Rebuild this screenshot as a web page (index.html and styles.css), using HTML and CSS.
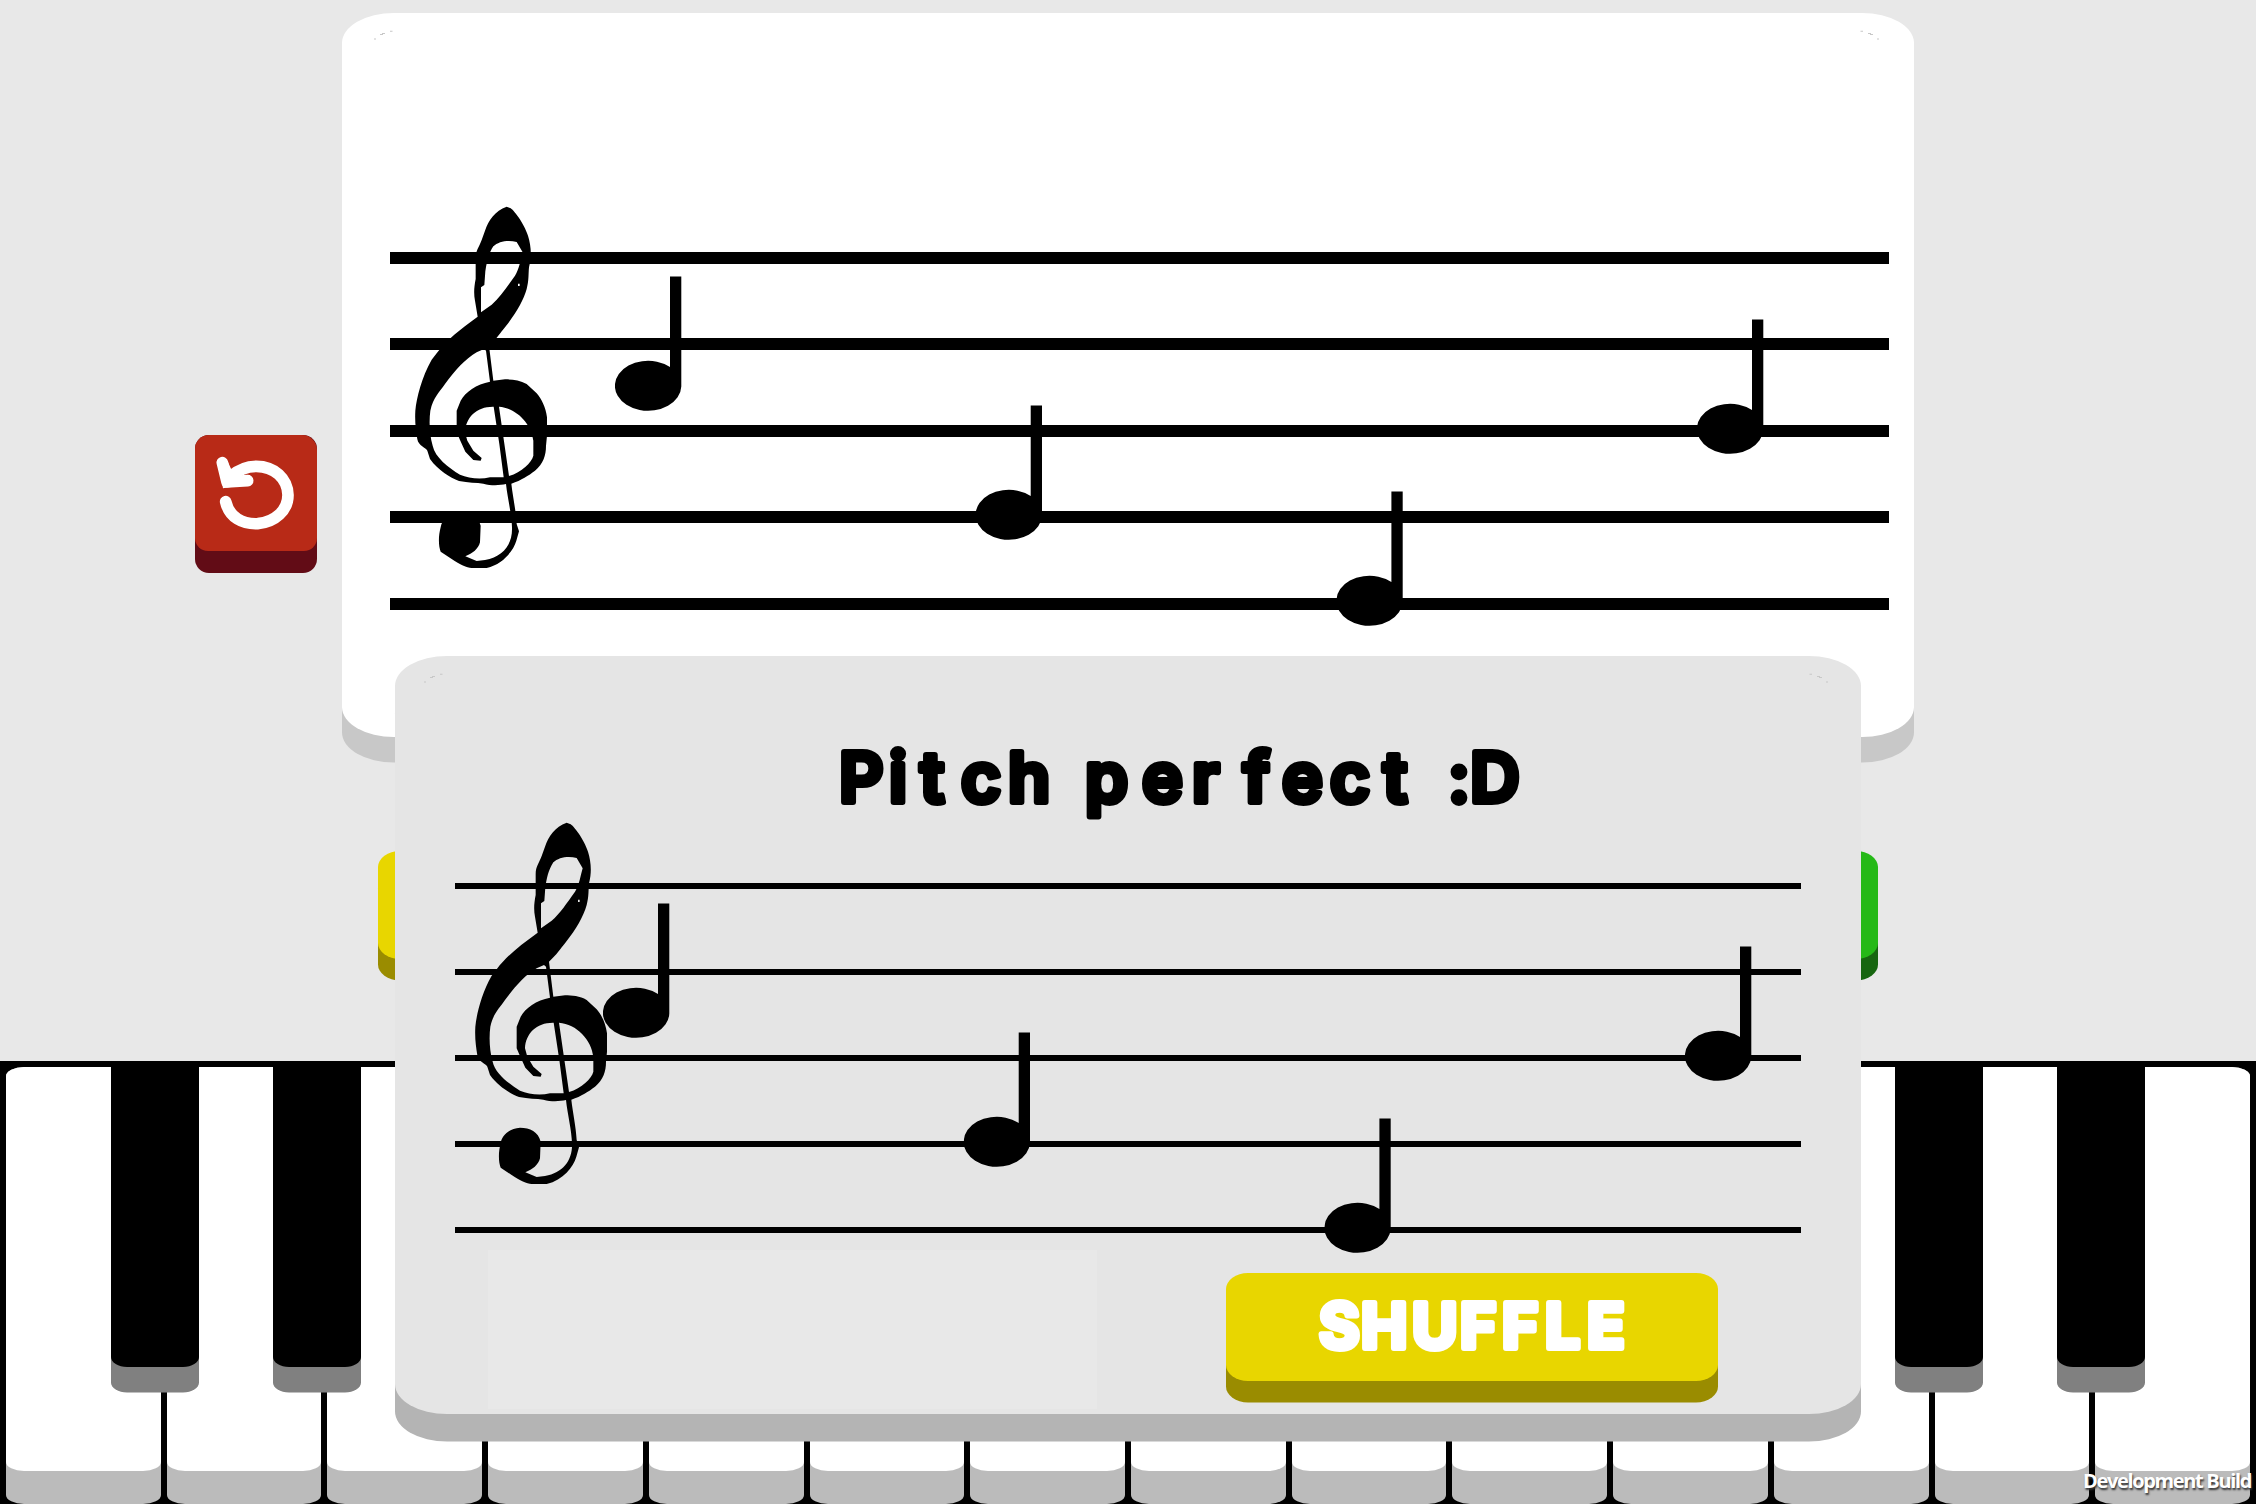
FILE: index.html
```html
<!DOCTYPE html>
<html lang="en">
<head>
<meta charset="utf-8">
<title>Pitch perfect</title>
<link rel="stylesheet" href="styles.css">
</head>
<body>
<svg class="defs" aria-hidden="true">
  <symbol id="clef" viewBox="0 0 600 1200">
    <path fill-rule="evenodd" d="M380 68C345 80 325 110 315 140L305 168C297 190 287 200 287 222V285C282 310 281 330 285 350L293 398C240 436 200 468 170 508L155 527C125 580 110 640 106 680C104 715 108 740 112 766C115 785 138 792 142 800L150 825C175 860 210 880 237 891C265 897 290 896 310 899C335 906 360 904 378 900C382 940 395 990 396 1030C398 1080 370 1118 315 1128L290 1131L256 1117C278 1108 295 1095 300 1075L302 1025C295 995 270 983 240 983C210 985 185 1005 182 1030C175 1055 175 1085 182 1103L215 1125C240 1143 260 1150 275 1152H320C370 1140 400 1100 409 1070L417 1042L410 1020C408 980 398 935 394 899C425 888 445 875 465 860C490 838 498 815 498 785L501 755V700C497 670 485 645 470 628L440 600C420 588 395 586 375 586L340 590L327 485C350 465 362 445 375 430C410 385 430 350 440 315C447 290 445 270 447 250C456 215 453 185 444 155C432 118 400 75 390 72ZM303 385V310L313 303L316 262C320 235 325 210 340 187C355 172 385 167 410 174L428 205C422 225 418 255 405 275C380 310 360 340 335 362ZM290 505L312 495L318 500L330 593C290 600 255 625 242 650L230 680V745L240 768L256 803L280 828L302 830L305 822L280 800L262 770L255 745C257 700 290 667 341 668L358 780L371 880H330C300 887 265 883 240 872C205 850 165 820 158 785C148 750 147 710 151 680C160 640 178 625 195 600C225 560 255 525 290 505ZM357 668C410 672 455 720 460 770V815C455 835 425 865 387 876ZM414 299H419V306H414Z"/>
  </symbol>
  <symbol id="note" viewBox="0 0 67 136">
    <path d="M55 0.5H66.3V110.500A33.200 25 0 1 1 55 91Z"/>
  </symbol>
  <symbol id="flecks" viewBox="0 0 20 12">
    <path class="fleck" d="M0 8.500h2v1h-2zM6 4h2v-1h3v1h-2v1h-3zM16 0.800h2.500v1h-2.500z"/>
  </symbol>
</svg>

<main class="game">
  <section class="top">
    <button class="reset" aria-label="Reset">
      <svg class="reset-icon" viewBox="0 0 366 348">
        <path d="M92 200C103 248 143 268 188 266C240 262 279 226 279 180C278 131 238 94 184 94C157 94 128 106 106 125"/>
        <path d="M82 83L96 141L158 137" />
        <path class="tip" d="M70 85L99 81L110 106L137 128L158 124L160 148L84 160Z"/>
      </svg>
    </button>
    <div class="sheet">
      <svg class="flecks left"><use href="#flecks"/></svg>
      <svg class="flecks right"><use href="#flecks"/></svg>
      <div class="staff">
        <i></i><i></i><i></i><i></i><i></i>
        <svg class="clef"><use href="#clef"/></svg>
        <svg class="note n1"><use href="#note"/></svg>
        <svg class="note n2"><use href="#note"/></svg>
        <svg class="note n3"><use href="#note"/></svg>
        <svg class="note n4"><use href="#note"/></svg>
      </div>
    </div>
  </section>
  <section class="actions">
    <button class="btn yellow" aria-label="Play"></button>
    <button class="btn green" aria-label="Check"></button>
  </section>
  <section class="keyboard">
    <div class="white"></div><div class="white"></div><div class="white"></div><div class="white"></div><div class="white"></div><div class="white"></div><div class="white"></div>
    <div class="white"></div><div class="white"></div><div class="white"></div><div class="white"></div><div class="white"></div><div class="white"></div><div class="white"></div>
    <div class="black b1"></div><div class="black b2"></div><div class="black b3"></div><div class="black b4"></div>
  </section>

  <section class="popup">
    <svg class="flecks left"><use href="#flecks"/></svg>
    <svg class="flecks right"><use href="#flecks"/></svg>
    <svg class="title" viewBox="0 0 700 90">
      <text y="70" x="2 52 83 124 171 220 248 305 355 406 445 493 546 590 611 633">Pitch perfect :D</text>
    </svg>
    <div class="staff thin">
      <i></i><i></i><i></i><i></i><i></i>
      <svg class="clef"><use href="#clef"/></svg>
      <svg class="note n1"><use href="#note"/></svg>
      <svg class="note n2"><use href="#note"/></svg>
      <svg class="note n3"><use href="#note"/></svg>
      <svg class="note n4"><use href="#note"/></svg>
    </div>
    <div class="footer">
      <div class="slot"></div>
      <button class="btn yellow">
        <svg class="label" viewBox="0 0 492 107">
          <text y="75" x="93 135 186 234 276 319 361">SHUFFLE</text>
        </svg>
      </button>
    </div>
  </section>
  <div class="build">Development Build</div>
</main>
</body>
</html>
```
FILE: styles.css
```css
* { box-sizing: border-box; }
body { margin: 0; background: #e8e8e8; }
button { border: 0; padding: 0; display: block; }
svg { display: block; }
.defs { position: absolute; width: 0; height: 0; }

.game {
  position: relative;
  width: 2256px;
  height: 1504px;
  overflow: hidden;
  display: flex;
  flex-direction: column;
}

.top {
  display: flex;
  gap: 25px;
  padding: 13px 0 0 195px;
  height: 851px;
}
.reset {
  display: flex;
  align-items: flex-start;
  width: 122px;
  height: 138px;
  margin-top: 422px;
  background: #620c16;
  border-radius: 14px;
}
.reset-icon {
  width: 122px;
  height: 116px;
  background: #b82a17;
  border-radius: 14px 15px 13px 13px;
}
.reset-icon path {
  fill: none;
  stroke: #fff;
  stroke-width: 35;
  stroke-linecap: round;
  stroke-linejoin: round;
}
.reset-icon .tip { fill: #fff; stroke: none; }

.sheet, .popup {
  border-radius: 52px / 30px;
}
.sheet {
  position: relative;
  width: 1572px;
  height: 724px;
  padding: 239px 25px 0 48px;
  background: #fff;
  box-shadow: 0 25.500px 0 #c8c8c8;
}
.flecks { position: absolute; width: 20px; height: 12px; top: 17px; }
.flecks.left { left: 32px; }
.flecks.right { right: 35px; transform: scaleX(-1); }
.fleck { fill: #c8c8c8; }

.staff {
  position: relative;
  display: flex;
  flex-direction: column;
  gap: 74.400px;
}
.staff i { height: 12px; background: #000; }
.staff.thin { gap: 80px; }
.staff.thin i { height: 6px; }
.clef { position: absolute; width: 200px; height: 400px; left: -10px; top: -67.600px; }
.thin .clef { left: -15px; top: -83px; }

.note { position: absolute; width: 67px; height: 136px; top: 24px; left: 225px; }
.thin .note { top: 20px; left: 148px; }
.note.n2 { transform: translate(360.700px, 129px); }
.note.n3 { transform: translate(721.400px, 215px); }
.note.n4 { transform: translate(1082px, 43px); }

.actions {
  display: flex;
  justify-content: space-between;
  padding: 0 378px;
  height: 210px;
}
.btn {
  width: 492px;
  height: 107.500px;
  border-radius: 22px / 16px;
}
.yellow { background: #e8d600; box-shadow: 0 21.500px 0 #9a8c00; }
.green { background: #25b917; box-shadow: 0 21.500px 0 #176610; }

.keyboard {
  position: relative;
  display: flex;
  gap: 6px;
  height: 443px;
  padding: 6px 6px 0;
  background: #000;
}
.white {
  flex: 1;
  height: 437px;
  background: #bbb;
  border-radius: 18px / 9px;
}
.white::before {
  content: "";
  display: block;
  height: 403.500px;
  background: #fff;
  border-radius: 18px / 9px;
}
.black {
  position: absolute;
  top: 0;
  width: 88px;
  height: 305.500px;
  background: #000;
  border-radius: 0 0 16px 16px / 0 0 10px 10px;
  box-shadow: 0 25.500px 0 #808080;
}
.b1 { left: 111px; }
.b2 { left: 273px; }
.b3 { left: 1895px; }
.b4 { left: 2057px; }

.popup {
  position: absolute;
  left: 395px;
  top: 656px;
  width: 1466px;
  height: 758px;
  padding: 76px 60px 0;
  background: #e5e5e5;
  box-shadow: 0 27.500px 0 #b4b4b4;
}
.popup .flecks.left { left: 29px; top: 17px; }
.popup .flecks.right { right: 33px; top: 17px; }
.popup .fleck { fill: #bdbdbd; }
.title { width: 700px; height: 90px; margin-left: 382px; }
.title text, .label text {
  font-family: Inter, "Liberation Sans", sans-serif;
  font-weight: 600;
  font-size: 69px;
  fill: #000;
  stroke: #000;
  stroke-width: 6px;
  stroke-linejoin: round;
}
.popup .staff { margin-top: 61px; }
.footer { display: flex; justify-content: space-between; margin-top: 17px; padding: 0 83px 0 33px; }
.slot { width: 609px; height: 159px; background: #e8e8e8; }
.footer .btn { margin-top: 23px; }
.label { width: 492px; height: 107px; }
.label text { font-size: 62px; fill: #fff; stroke: #fff; font-weight: 700; }

.build {
  position: absolute;
  right: 5px;
  bottom: 9px;
  font: 700 20px/28px "Open Sans", "Noto Sans", sans-serif;
  letter-spacing: -1.350px;
  color: #fff;
  text-shadow: 1px 2px 2px #333;
}
```
